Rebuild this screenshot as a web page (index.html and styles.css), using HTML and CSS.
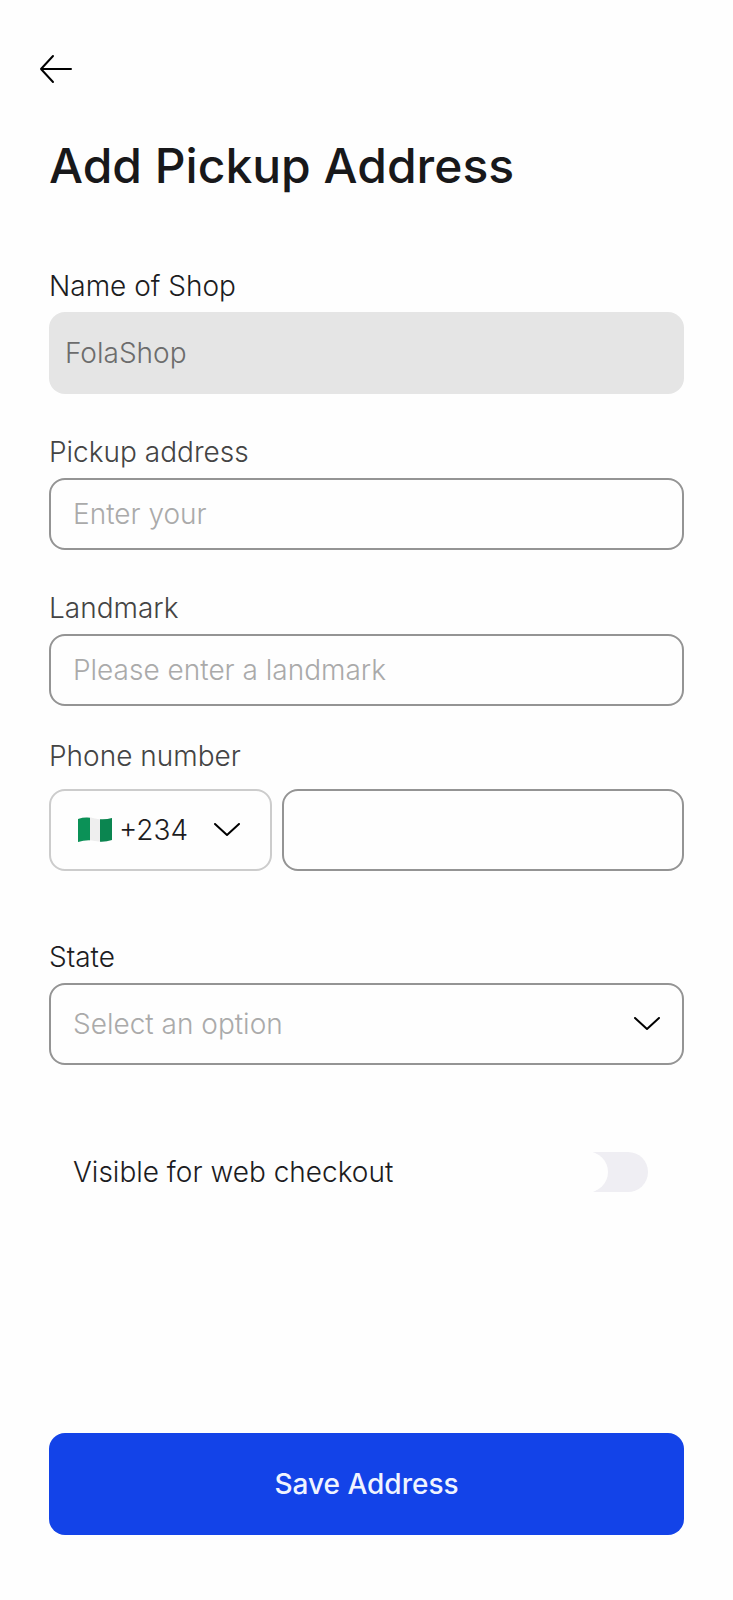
FILE: index.html
```
<!DOCTYPE html>
<html lang="en">
<head>
  <meta charset="UTF-8" />
  <meta name="viewport" content="width=device-width, initial-scale=1.0" />

  <title>Add Pickup Address</title>
  <link rel="stylesheet" href="styles.css">
</head>
<body>

  <header>
    <button type="button" class="back" aria-label="Back">
      <svg width="34" height="30" viewBox="0 0 34 30">
        <path d="M32 15H2M14 2L2 15L14 28" />
      </svg>
    </button>
    <h1>Add Pickup Address</h1>
  </header>

  <form class="address-form">
    <div class="field">
      <label class="dark" for="shopName">Name of Shop</label>
      <input type="text" id="shopName" class="box tall disabled" value="FolaShop" disabled>
    </div>

    <div class="field">
      <label for="pickupAddress">Pickup address</label>
      <input type="text" id="pickupAddress" class="box" placeholder="Enter your">
    </div>

    <div class="field">
      <label for="landmark">Landmark</label>
      <input type="text" id="landmark" class="box" placeholder="Please enter a landmark">
    </div>

    <div class="field phone">
      <label for="phone">Phone number</label>
      <div class="phone-row">
        <div class="select-wrap code">
          <svg class="flag" width="34" height="26" viewBox="0 0 34 26">
            <path fill="#eee" d="M0 2Q8 -1 17 1.500T34 1V23Q26 26 17 24T0 25Z" />
            <path fill="#0b9157" d="M0 2Q6 0 12 .7V23.300Q6 23 0 25Z" />
            <path fill="#0b8550" d="M22 2.200Q28 2.700 34 1V23Q28 25 22 24.700Z" />
          </svg>
          <select id="countryCode" class="box tall" aria-label="Country code">
            <option>+234</option>
          </select>
          <svg class="chevron" width="26" height="14" viewBox="0 0 26 14">
            <path d="M1 1L13 12L25 1" />
          </svg>
        </div>
        <input type="tel" id="phone" class="box tall">
      </div>
    </div>

    <div class="field state">
      <label class="dark" for="state">State</label>
      <div class="select-wrap">
        <select id="state" class="box tall empty">
          <option>Select an option</option>
        </select>
        <svg class="chevron" width="26" height="14" viewBox="0 0 26 14">
          <path d="M1 1L13 12L25 1" />
        </svg>
      </div>
    </div>

    <div class="toggle-row">
      <label class="dark" for="visible">Visible for web checkout</label>
      <input type="checkbox" id="visible" class="switch">
    </div>

    <button type="submit" class="save">Save Address</button>
  </form>

</body>
</html>
```
FILE: styles.css
```
* {
  box-sizing: border-box;
}
body {
  font-family: Inter, "Liberation Sans", sans-serif;
  font-size: 28px;
  font-weight: 300;
  line-height: 32px;
  background-color: #fefefe;
  color: #1c1c1e;
  margin: 0;
  padding: 52px 49px 64px;
}
.back {
  display: block;
  margin-left: -12px;
  padding: 2px;
  border: none;
  background: none;
  cursor: pointer;
}
svg {
  display: block;
  fill: none;
  stroke: #000;
  stroke-width: 2;
  stroke-linecap: round;
  stroke-linejoin: round;
}
h1 {
  margin: 50px 0 74px;
  font-size: 48px;
  font-weight: 500;
  line-height: 60px;
  color: #18181a;
}
.field {
  margin-bottom: 42px;
}
label {
  display: block;
  margin-bottom: 10px;
  color: #444;
}
label.dark {
  color: #1c1c1e;
}
.box {
  display: block;
  width: 100%;
  height: 72px;
  margin: 0;
  padding: 0 22px;
  border: 2px solid #949494;
  border-radius: 16px;
  background: #fefefe;
  color: #1c1c1e;
  font: inherit;
  appearance: none;
}
.box::placeholder {
  color: #aaa;
  opacity: 1;
}
.box.tall {
  height: 82px;
}
.box.disabled {
  padding: 0 16px;
  border: none;
  background: #e5e5e5;
  color: #6c6c6c;
}
.box.empty {
  color: #aaa;
}

/* Phone number */
.phone {
  margin-top: -8px;
  margin-bottom: 70px;
}
.phone label {
  margin-bottom: 17px;
}
.phone-row {
  display: flex;
  gap: 10px;
}
.select-wrap {
  position: relative;
}
.code {
  flex: 0 0 223px;
}
.code .box {
  padding-left: 68px;
  border-color: #ccc;
}
.flag {
  position: absolute;
  left: 29px;
  top: 28px;
  stroke: none;
  pointer-events: none;
}
.chevron {
  position: absolute;
  right: 24px;
  top: 34px;
  pointer-events: none;
}
.code .chevron {
  right: 32px;
}

.state {
  margin-bottom: 87px;
}
.toggle-row {
  display: flex;
  align-items: center;
  justify-content: space-between;
  padding: 0 36px 0 24px;
}
.toggle-row label {
  margin: 0;
}
.switch {
  width: 80px;
  height: 40px;
  margin: 0;
  border-radius: 20px;
  background: #efeef3;
  appearance: none;
  cursor: pointer;
}
.switch::before {
  content: "";
  display: block;
  width: 40px;
  height: 40px;
  border-radius: 50%;
  background: #fefefe;
  box-shadow: -2px 0 0 1px #fefefe;
}
.switch:checked {
  background: #1343e8;
}
.switch:checked::before {
  margin-left: 40px;
  box-shadow: none;
}
.save {
  display: block;
  width: 100%;
  height: 102px;
  margin-top: 241px;
  border: none;
  border-radius: 16px;
  background: #1343e8;
  color: #f0f4ff;
  font: inherit;
  font-weight: 500;
  cursor: pointer;
}
```
